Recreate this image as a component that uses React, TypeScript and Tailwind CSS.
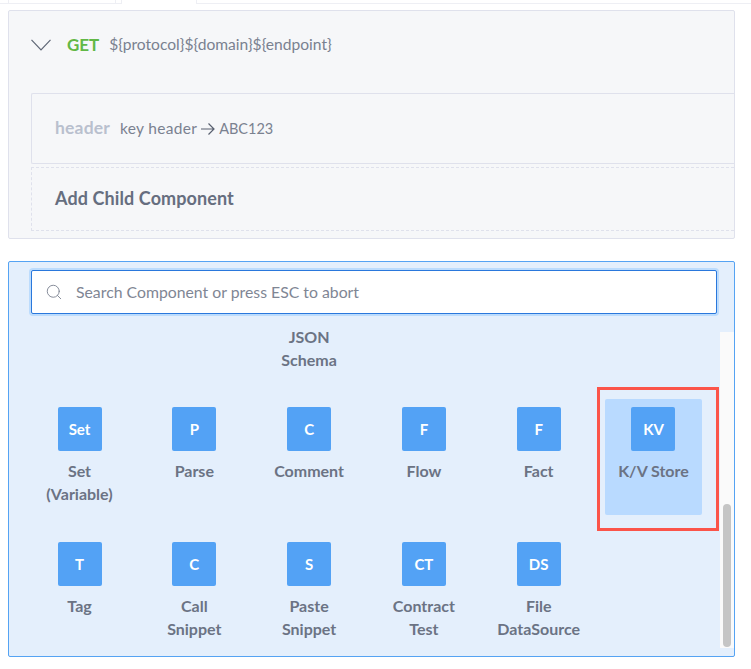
import { Search } from "lucide-react";

type Item = { badge: string; lines: string[]; active?: boolean };

const row1: Item[] = [
  { badge: "Set", lines: ["Set", "(Variable)"] },
  { badge: "P", lines: ["Parse"] },
  { badge: "C", lines: ["Comment"] },
  { badge: "F", lines: ["Flow"] },
  { badge: "F", lines: ["Fact"] },
  { badge: "KV", lines: ["K/V Store"], active: true },
];

const row2: Item[] = [
  { badge: "T", lines: ["Tag"] },
  { badge: "C", lines: ["Call", "Snippet"] },
  { badge: "S", lines: ["Paste", "Snippet"] },
  { badge: "CT", lines: ["Contract", "Test"] },
  { badge: "DS", lines: ["File", "DataSource"] },
];

function Tile({ item }: { item: Item }) {
  return (
    <div
      className={`flex h-[116px] w-[97px] flex-col items-center rounded-[2px] pt-2 ${
        item.active ? "bg-[#b9daff]" : ""
      }`}
    >
      <div className="flex h-11 w-11 items-center justify-center rounded-[2px] bg-[#53a2f5] text-[15px] font-bold text-white">
        {item.badge}
      </div>
      <div className="mt-[8px] whitespace-nowrap text-center text-[16px] font-bold leading-[23px] text-[#6b7384]">
        {item.lines.map((line) => (
          <div key={line}>{line}</div>
        ))}
      </div>
    </div>
  );
}

export default function App() {
  return (
    <div className="relative h-[669px] w-[751px] overflow-hidden bg-white font-['Lato',sans-serif]">
      {/* tab strip */}
      <div className="flex h-[10px] items-start">
        <div className="h-[4px] w-[8px] border-b border-[#eeeff4]" />
        <div className="h-[4px] w-[107px] border-b border-l border-[#eeeff4]" />
        <div className="h-[4px] w-[7px] border-x border-b border-[#eeeff4]" />
        <div className="w-[74px]" />
        <div className="h-[4px] flex-1 border-b border-l border-[#eeeff4]" />
      </div>

      {/* request panel */}
      <div className="ml-2 h-[229px] w-[727px] rounded-[2px] border border-[#dfe1ec] bg-[#f6f7f9] pl-[22px]">
        <div className="flex h-[67px] items-center">
          <svg className="h-[12px] w-[20px]" viewBox="0 0 20 12" fill="none" stroke="#5f6776" strokeWidth="1.2">
            <path d="M0.500 0.800 10 10.800 19.500 0.800" />
          </svg>
          <span className="ml-[16px] text-[17px] font-bold text-[#61b846]">GET</span>
          <span className="ml-[10px] text-[15.600px] text-[#7a8190]">{"${protocol}${domain}${endpoint}"}</span>
        </div>
        <div className="mt-[15px] flex h-[71px] items-center rounded-l-[2px] border border-r-0 border-[#dfe1ec] pl-[23px]">
          <span className="text-[17.500px] font-bold tracking-[0.2px] text-[#b9c0ce]">header</span>
          <span className="ml-[10px] flex items-center text-[#7a8190]">
            <span className="text-[15.500px] tracking-[0.3px]">key header</span>
            <svg className="mx-[3px] h-4 w-4" viewBox="0 0 16 16" fill="none" stroke="#596070" strokeWidth="1.2">
              <path d="M1 8h13M8.500 2.500 14 8l-5.500 5.500" />
            </svg>
            <span className="text-[14.500px]">ABC123</span>
          </span>
        </div>
        <div className="mt-[3px] flex h-[64px] items-center border border-r-0 border-dashed border-[#dfe1ec] pb-[2px] pl-[23px]">
          <span className="text-[18px] font-bold tracking-[0.1px] text-[#666e7f]">Add Child Component</span>
        </div>
      </div>

      {/* component picker */}
      <div className="relative ml-2 mt-[22px] h-[396px] w-[727px] overflow-hidden rounded-[2px] border border-[#55a3f3] bg-[#e4effc]">
        <div className="ml-[22px] mt-2 flex h-11 w-[686px] items-center rounded-[2px] border-[1.5px] border-[#2a78dc] bg-white pl-[13px] shadow-[0_0_0_2px_#bcdcfd]">
          <Search className="h-[18px] w-[18px] text-[#7a8190]" strokeWidth={1.2} />
          <span className="ml-[13px] text-[15.800px] text-[#7f8694]">Search Component or press ESC to abort</span>
        </div>

        <div className="mt-[18px] flex h-[316px]">
          <div className="flex-1 pl-[22px]">
            <div className="flex h-[67px] w-[671px] justify-between">
              <div className="w-[97px]" />
              <div className="w-[97px]" />
              <div className="mt-[-7px] w-[97px] text-center text-[16px] font-bold leading-[23px] text-[#6b7384]">
                <div>JSON</div>
                <div>Schema</div>
              </div>
              <div className="w-[97px]" />
              <div className="w-[97px]" />
              <div className="w-[97px]" />
            </div>
            <div className="flex w-[671px] justify-between">
              {row1.map((item) => (
                <Tile key={item.lines[0]} item={item} />
              ))}
            </div>
            <div className="mt-[19px] flex w-[671px] justify-between">
              {row2.map((item) => (
                <Tile key={item.lines[0]} item={item} />
              ))}
              <div className="w-[97px]" />
            </div>
          </div>
          <div className="flex w-[14px] flex-col justify-end bg-[#fafafa] px-[3px] pb-px">
            <div className="h-[143px] rounded-full bg-[#c5c5c5]" />
          </div>
        </div>
      </div>

      {/* red highlight */}
      <div className="absolute left-[597px] top-[387px] h-[144px] w-[122px] border-[3px] border-[#fb5449]" />
    </div>
  );
}
